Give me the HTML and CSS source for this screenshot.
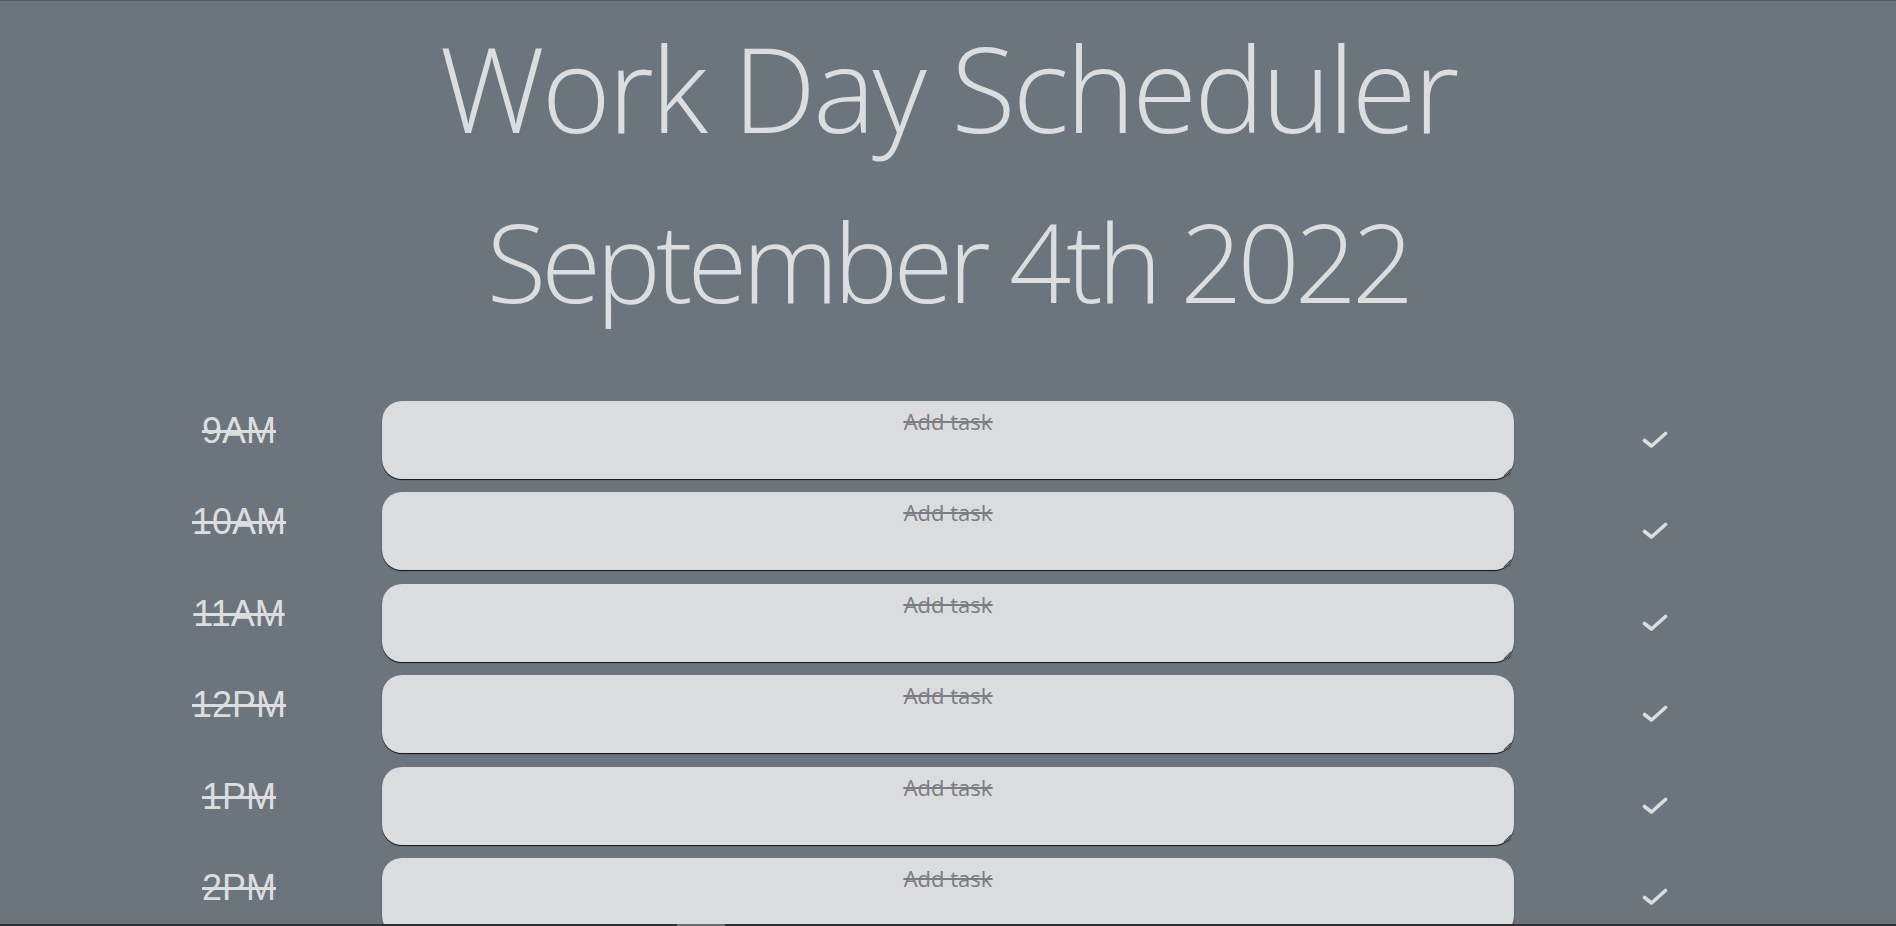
FILE: index.html
```html
<!DOCTYPE html>
<html lang="en">
<head>
<meta charset="utf-8">
<title>Work Day Scheduler</title>
<link rel="stylesheet" href="styles.css">
</head>
<body>
<div class="page">
  <header class="jumbotron">
    <h1 class="title">Work Day Scheduler</h1>
    <p class="date">September 4th 2022</p>
  </header>
  <main class="schedule">
    <div class="row past">
      <div class="hour">9AM</div>
      <div class="task-wrap"><textarea class="task" placeholder="Add task"></textarea><span class="grip"><svg viewBox="0 0 10 10" width="10" height="10"><path d="M9 2 L2 9 M9 6 L6 9" stroke="#555" stroke-width="1.2" fill="none"/></svg></span></div>
      <button class="save" aria-label="Save"><svg viewBox="0 0 26 18" width="26" height="18"><polyline points="2.5,9.5 9.5,15 23.5,2.5" fill="none" stroke="#dcdddf" stroke-width="3.6" stroke-linecap="round" stroke-linejoin="round"/></svg></button>
    </div>
    <div class="row past">
      <div class="hour">10AM</div>
      <div class="task-wrap"><textarea class="task" placeholder="Add task"></textarea><span class="grip"><svg viewBox="0 0 10 10" width="10" height="10"><path d="M9 2 L2 9 M9 6 L6 9" stroke="#555" stroke-width="1.2" fill="none"/></svg></span></div>
      <button class="save" aria-label="Save"><svg viewBox="0 0 26 18" width="26" height="18"><polyline points="2.5,9.5 9.5,15 23.5,2.5" fill="none" stroke="#dcdddf" stroke-width="3.6" stroke-linecap="round" stroke-linejoin="round"/></svg></button>
    </div>
    <div class="row past">
      <div class="hour">11AM</div>
      <div class="task-wrap"><textarea class="task" placeholder="Add task"></textarea><span class="grip"><svg viewBox="0 0 10 10" width="10" height="10"><path d="M9 2 L2 9 M9 6 L6 9" stroke="#555" stroke-width="1.2" fill="none"/></svg></span></div>
      <button class="save" aria-label="Save"><svg viewBox="0 0 26 18" width="26" height="18"><polyline points="2.5,9.5 9.5,15 23.5,2.5" fill="none" stroke="#dcdddf" stroke-width="3.6" stroke-linecap="round" stroke-linejoin="round"/></svg></button>
    </div>
    <div class="row past">
      <div class="hour">12PM</div>
      <div class="task-wrap"><textarea class="task" placeholder="Add task"></textarea><span class="grip"><svg viewBox="0 0 10 10" width="10" height="10"><path d="M9 2 L2 9 M9 6 L6 9" stroke="#555" stroke-width="1.2" fill="none"/></svg></span></div>
      <button class="save" aria-label="Save"><svg viewBox="0 0 26 18" width="26" height="18"><polyline points="2.5,9.5 9.5,15 23.5,2.5" fill="none" stroke="#dcdddf" stroke-width="3.6" stroke-linecap="round" stroke-linejoin="round"/></svg></button>
    </div>
    <div class="row past">
      <div class="hour">1PM</div>
      <div class="task-wrap"><textarea class="task" placeholder="Add task"></textarea><span class="grip"><svg viewBox="0 0 10 10" width="10" height="10"><path d="M9 2 L2 9 M9 6 L6 9" stroke="#555" stroke-width="1.2" fill="none"/></svg></span></div>
      <button class="save" aria-label="Save"><svg viewBox="0 0 26 18" width="26" height="18"><polyline points="2.5,9.5 9.5,15 23.5,2.5" fill="none" stroke="#dcdddf" stroke-width="3.6" stroke-linecap="round" stroke-linejoin="round"/></svg></button>
    </div>
    <div class="row past">
      <div class="hour">2PM</div>
      <div class="task-wrap"><textarea class="task" placeholder="Add task"></textarea><span class="grip"><svg viewBox="0 0 10 10" width="10" height="10"><path d="M9 2 L2 9 M9 6 L6 9" stroke="#555" stroke-width="1.2" fill="none"/></svg></span></div>
      <button class="save" aria-label="Save"><svg viewBox="0 0 26 18" width="26" height="18"><polyline points="2.5,9.5 9.5,15 23.5,2.5" fill="none" stroke="#dcdddf" stroke-width="3.6" stroke-linecap="round" stroke-linejoin="round"/></svg></button>
    </div>
    <div class="row past">
      <div class="hour">3PM</div>
      <div class="task-wrap"><textarea class="task" placeholder="Add task"></textarea><span class="grip"><svg viewBox="0 0 10 10" width="10" height="10"><path d="M9 2 L2 9 M9 6 L6 9" stroke="#555" stroke-width="1.2" fill="none"/></svg></span></div>
      <button class="save" aria-label="Save"><svg viewBox="0 0 26 18" width="26" height="18"><polyline points="2.5,9.5 9.5,15 23.5,2.5" fill="none" stroke="#dcdddf" stroke-width="3.6" stroke-linecap="round" stroke-linejoin="round"/></svg></button>
    </div>
    <div class="row past">
      <div class="hour">4PM</div>
      <div class="task-wrap"><textarea class="task" placeholder="Add task"></textarea><span class="grip"><svg viewBox="0 0 10 10" width="10" height="10"><path d="M9 2 L2 9 M9 6 L6 9" stroke="#555" stroke-width="1.2" fill="none"/></svg></span></div>
      <button class="save" aria-label="Save"><svg viewBox="0 0 26 18" width="26" height="18"><polyline points="2.5,9.5 9.5,15 23.5,2.5" fill="none" stroke="#dcdddf" stroke-width="3.6" stroke-linecap="round" stroke-linejoin="round"/></svg></button>
    </div>
    <div class="row past">
      <div class="hour">5PM</div>
      <div class="task-wrap"><textarea class="task" placeholder="Add task"></textarea><span class="grip"><svg viewBox="0 0 10 10" width="10" height="10"><path d="M9 2 L2 9 M9 6 L6 9" stroke="#555" stroke-width="1.2" fill="none"/></svg></span></div>
      <button class="save" aria-label="Save"><svg viewBox="0 0 26 18" width="26" height="18"><polyline points="2.5,9.5 9.5,15 23.5,2.5" fill="none" stroke="#dcdddf" stroke-width="3.6" stroke-linecap="round" stroke-linejoin="round"/></svg></button>
    </div>
  </main>
</div>
<div class="bottom-bar"><span class="bottom-thumb"></span></div>
</body>
</html>
```

FILE: styles.css
```css
html, body {
  margin: 0;
  padding: 0;
  background: #6c757d;
}

body {
  font-family: "Open Sans", "Liberation Sans", sans-serif;
  color: #dcdddf;
}

.page {
  border-top: 1px solid #5a5c5f;
  padding: 0 96px 40px;
}

.jumbotron {
  display: flex;
  flex-direction: column;
  align-items: center;
}

.title {
  margin: 28px 0 0;
  font-family: "Open Sans", sans-serif;
  font-weight: 300;
  font-size: 118px;
  line-height: 1;
  color: #dcdddf;
  letter-spacing: -3px;
}

.date {
  margin: 59px 0 0;
  font-family: "Open Sans", sans-serif;
  font-weight: 300;
  font-size: 109px;
  line-height: 1;
  color: #dcdddf;
  letter-spacing: -5px;
}

.schedule {
  margin-top: 86px;
  display: flex;
  flex-direction: column;
  gap: 13.4px;
}

.row {
  display: grid;
  grid-template-columns: 286px 1fr 286px;
  align-items: start;
}

.hour {
  font-family: "Liberation Sans", Arial, sans-serif;
  font-size: 36px;
  line-height: 1;
  padding-top: 12px;
  text-align: center;
  color: #dcdddf;
}

.past .hour {
  text-decoration: line-through;
}

.task-wrap {
  position: relative;
}

.task {
  display: block;
  box-sizing: border-box;
  height: 78px;
  width: 100%;
  margin: 0;
  padding: 6px 12px;
  border: none;
  border-radius: 20px;
  background: #dbdcde;
  box-shadow: 0 1px 1px rgba(0, 0, 0, 0.85);
  font-family: "Open Sans", sans-serif;
  font-size: 22px;
  line-height: 1.362;
  text-align: center;
  color: #495057;
  outline: none;
  resize: none;
}

.task::placeholder {
  color: #7a7d81;
  opacity: 1;
  text-decoration: line-through;
}

.past .task {
  text-decoration: line-through;
}

.grip {
  position: absolute;
  right: 2px;
  bottom: 2px;
  width: 10px;
  height: 10px;
  display: block;
  line-height: 0;
}

.save {
  align-self: center;
  justify-self: center;
  display: flex;
  align-items: center;
  justify-content: center;
  width: 40px;
  height: 40px;
  padding: 0;
  margin: 0 0 0 -4px;
  border: none;
  background: transparent;
  cursor: pointer;
}

.bottom-bar {
  position: fixed;
  left: 0;
  right: 0;
  bottom: 0;
  height: 2px;
  background: #2e3033;
}

.bottom-thumb {
  position: absolute;
  left: 677px;
  width: 48px;
  top: 0;
  bottom: 0;
  background: #6a6d70;
}
```
